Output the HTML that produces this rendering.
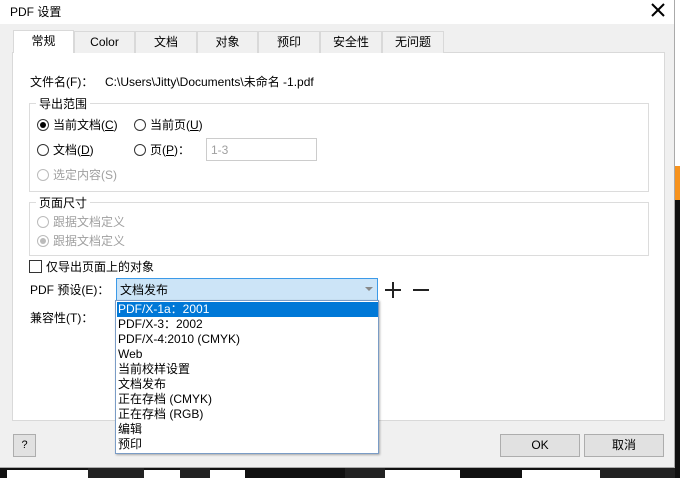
<!DOCTYPE html>
<html><head><meta charset="utf-8"><style>
*{box-sizing:border-box;margin:0;padding:0}
body{width:680px;height:478px;overflow:hidden;position:relative;background:#111;font-family:"Liberation Sans","Noto Sans CJK SC",sans-serif;font-size:12px;color:#000}
.a{position:absolute}
.t{position:absolute;white-space:nowrap;line-height:14px}
.dlg{left:0;top:0;width:675px;height:468px;background:#f0f0f0;border-right:1px solid #aaa;border-bottom:1px solid #aaa}
.tab{position:absolute;top:31px;height:22px;background:#f0f0f0;border:1px solid #d9d9d9;border-bottom:none;text-align:center;line-height:20px;font-size:12px}
.radio{position:absolute;width:12px;height:12px;border:1px solid #333;border-radius:50%;background:#fff}
.dis{color:#a0a0a0}
.radio.d{border-color:#bbb}
.grp{position:absolute;border:1px solid #dcdcdc}
.btn{position:absolute;background:#e1e1e1;border:1px solid #adadad;text-align:center;line-height:21px}
.it{position:absolute;left:1px;width:261px;height:15px;line-height:15px;padding-left:1px;white-space:nowrap}
</style></head><body>
<div class="a" style="left:0;top:0;width:680px;height:166px;background:#fff"></div>
<div class="a" style="left:0;top:166px;width:680px;height:34px;background:#f7931e"></div>
<div class="a" style="left:0;top:470px;width:680px;height:8px;background:#fff"></div>
<div class="a" style="left:0;top:468px;width:7px;height:10px;background:#111"></div>
<div class="a" style="left:88px;top:468px;width:56px;height:10px;background:#222"></div>
<div class="a" style="left:180px;top:468px;width:30px;height:10px;background:#222"></div>
<div class="a" style="left:245px;top:468px;width:100px;height:10px;background:#111"></div>
<div class="a" style="left:345px;top:468px;width:40px;height:10px;background:#222"></div>
<div class="a" style="left:460px;top:468px;width:62px;height:10px;background:#111"></div>
<div class="a" style="left:600px;top:468px;width:80px;height:10px;background:#222"></div>
<div class="a" style="left:675px;top:200px;width:5px;height:278px;background:#111"></div>

<div class="a dlg">
 <div class="a" style="left:0;top:0;width:674px;height:24px;background:#fff"></div>
 <div class="t" style="left:10px;top:5px;font-size:12px">PDF 设置</div>
 <svg class="a" style="left:650px;top:2px" width="16" height="16"><path d="M2 2L14 14M14 2L2 14" stroke="#000" stroke-width="2"/></svg>

 <div class="a" style="left:12px;top:52px;width:653px;height:369px;background:#fff;border:1px solid #d9d9d9"></div>
 <div class="tab" style="left:13px;width:61px;top:30px;height:23px;background:#fff;border-color:#d9d9d9">常规</div>
 <div class="tab" style="left:74px;width:61px">Color</div>
 <div class="tab" style="left:135px;width:62px">文档</div>
 <div class="tab" style="left:197px;width:61px">对象</div>
 <div class="tab" style="left:258px;width:62px">预印</div>
 <div class="tab" style="left:320px;width:62px">安全性</div>
 <div class="tab" style="left:382px;width:62px">无问题</div>

 <div class="t" style="left:30px;top:75px">文件名(F)：</div>
 <div class="t" style="left:105px;top:75px">C:\Users\Jitty\Documents\未命名 -1.pdf</div>

 <div class="grp" style="left:29px;top:103px;width:620px;height:89px"></div>
 <div class="t" style="left:36px;top:97px;background:#fff;padding:0 3px">导出范围</div>
 <div class="radio" style="left:37px;top:119px"><div class="a" style="left:2px;top:2px;width:6px;height:6px;border-radius:50%;background:#000"></div></div>
 <div class="t" style="left:53px;top:118px">当前文档(<u>C</u>)</div>
 <div class="radio" style="left:134px;top:119px"></div>
 <div class="t" style="left:150px;top:118px">当前页(<u>U</u>)</div>
 <div class="radio" style="left:37px;top:144px"></div>
 <div class="t" style="left:53px;top:143px">文档(<u>D</u>)</div>
 <div class="radio" style="left:134px;top:144px"></div>
 <div class="t" style="left:150px;top:143px">页(<u>P</u>)：</div>
 <div class="a" style="left:206px;top:138px;width:111px;height:23px;border:1px solid #ccc;background:#fff"></div>
 <div class="t dis" style="left:211px;top:143px">1-3</div>
 <div class="radio d" style="left:37px;top:169px"></div>
 <div class="t dis" style="left:53px;top:168px">选定内容(S)</div>

 <div class="grp" style="left:29px;top:202px;width:620px;height:54px"></div>
 <div class="t" style="left:36px;top:196px;background:#fff;padding:0 3px">页面尺寸</div>
 <div class="radio d" style="left:37px;top:216px"></div>
 <div class="t dis" style="left:53px;top:215px">跟据文档定义</div>
 <div class="radio d" style="left:37px;top:235px"><div class="a" style="left:2px;top:2px;width:6px;height:6px;border-radius:50%;background:#bbb"></div></div>
 <div class="t dis" style="left:53px;top:234px">跟据文档定义</div>

 <div class="a" style="left:29px;top:260px;width:13px;height:13px;border:1px solid #333;background:#fff"></div>
 <div class="t" style="left:46px;top:260px">仅导出页面上的对象</div>

 <div class="t" style="left:30px;top:283px">PDF 预设(E)：</div>
 <div class="a" style="left:116px;top:278px;width:262px;height:23px;background:#cce4f7;border:1px solid #3c9ae8"></div>
 <div class="t" style="left:120px;top:283px">文档发布</div>
 <svg class="a" style="left:364px;top:286px" width="10" height="6"><path d="M1 1L9 1L5 5Z" fill="#888"/></svg>
 <svg class="a" style="left:384px;top:281px" width="18" height="18"><path d="M9 1V17M1 9H17" stroke="#222" stroke-width="2"/></svg>
 <svg class="a" style="left:412px;top:281px" width="18" height="18"><path d="M1 9H17" stroke="#222" stroke-width="2"/></svg>

 <div class="t" style="left:30px;top:311px">兼容性(T)：</div>

 <div class="btn" style="left:13px;top:434px;width:23px;height:23px;font-size:11px">?</div>
 <div class="btn" style="left:500px;top:434px;width:80px;height:23px">OK</div>
 <div class="btn" style="left:584px;top:434px;width:80px;height:23px">取消</div>

 <div class="a" style="left:115px;top:300px;width:264px;height:154px;background:#fff;border:1px solid #7a9cc6;box-shadow:1px 1px 2px rgba(0,0,0,.3)">
  <div class="it" style="top:1px;background:#0078d7;color:#fff">PDF/X-1a：2001</div>
  <div class="it" style="top:16px">PDF/X-3：2002</div>
  <div class="it" style="top:31px">PDF/X-4:2010 (CMYK)</div>
  <div class="it" style="top:46px">Web</div>
  <div class="it" style="top:61px">当前校样设置</div>
  <div class="it" style="top:76px">文档发布</div>
  <div class="it" style="top:91px">正在存档 (CMYK)</div>
  <div class="it" style="top:106px">正在存档 (RGB)</div>
  <div class="it" style="top:121px">编辑</div>
  <div class="it" style="top:136px">预印</div>
 </div>
</div>
</body></html>
